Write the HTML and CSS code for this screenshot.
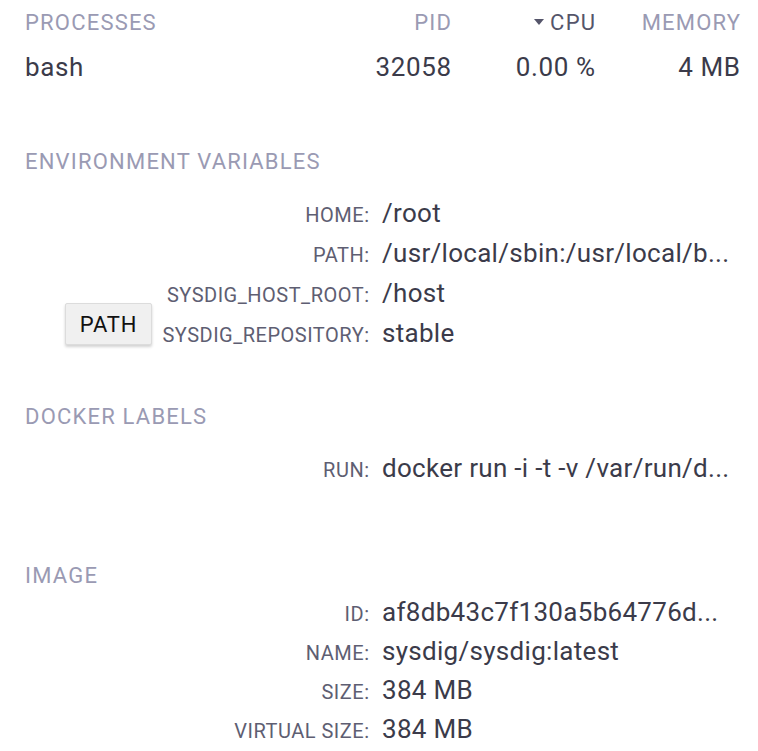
FILE: index.html
```html
<!DOCTYPE html>
<html>
<head>
<meta charset="utf-8">
<link rel="stylesheet" href="styles.css">
</head>
<body>
<div class="page">
  <section class="procs">
    <div class="th th-name">PROCESSES</div>
    <div class="th">PID</div>
    <div class="th th-sorted"><span class="caret"></span>CPU</div>
    <div class="th">MEMORY</div>
    <div class="td td-name">bash</div>
    <div class="td">32058</div>
    <div class="td">0.00 %</div>
    <div class="td">4 MB</div>
  </section>

  <section class="block env">
    <h2 class="heading">ENVIRONMENT VARIABLES</h2>
    <div class="kv">
      <div class="row"><span class="key">HOME:</span><span class="val">/root</span></div>
      <div class="row"><span class="key">PATH:</span><span class="val">/usr/local/sbin:/usr/local/b...</span></div>
      <div class="row"><span class="key">SYSDIG_HOST_ROOT:</span><span class="val">/host</span></div>
      <div class="row"><span class="key">SYSDIG_REPOSITORY:</span><span class="val">stable</span></div>
      <div class="tooltip">PATH</div>
    </div>
  </section>

  <section class="block docker">
    <h2 class="heading">DOCKER LABELS</h2>
    <div class="kv">
      <div class="row"><span class="key">RUN:</span><span class="val">docker run -i -t -v /var/run/d...</span></div>
    </div>
  </section>

  <section class="block image">
    <h2 class="heading heading-tight">IMAGE</h2>
    <div class="kv kv-tight">
      <div class="row"><span class="key">ID:</span><span class="val">af8db43c7f130a5b64776d...</span></div>
      <div class="row"><span class="key">NAME:</span><span class="val">sysdig/sysdig:latest</span></div>
      <div class="row"><span class="key">SIZE:</span><span class="val">384 MB</span></div>
      <div class="row"><span class="key">VIRTUAL SIZE:</span><span class="val">384 MB</span></div>
    </div>
  </section>
</div>
</body>
</html>
```

FILE: styles.css
```css
html, body {
  margin: 0;
  padding: 0;
  background: #ffffff;
}

body {
  font-family: Roboto, "Liberation Sans", sans-serif;
  color: #3b3b4a;
}

.page {
  padding: 11px 18px 0 25px;
}

.procs {
  display: grid;
  grid-template-columns: 1fr 140px 144px 145px;
  row-gap: 17px;
}

.th {
  font-size: 22px;
  line-height: 24px;
  letter-spacing: 1.2px;
  margin-right: -1.2px;
  color: #9a9ab3;
  text-align: right;
}

.th-sorted {
  color: #55556a;
}

.caret {
  display: inline-block;
  width: 0;
  height: 0;
  border-left: 5px solid transparent;
  border-right: 5px solid transparent;
  border-top: 6px solid #55556a;
  margin-right: 6px;
  vertical-align: 5px;
}

.td {
  font-size: 26px;
  line-height: 30px;
  letter-spacing: 0.6px;
  margin-right: -0.6px;
  color: #3b3b4a;
  text-align: right;
}

.procs .th-name,
.procs .td-name {
  text-align: left;
  margin-right: 0;
}

.block {
  margin-top: 68px;
}

.docker {
  margin-top: 52px;
}

.image {
  margin-top: 76px;
}

.heading {
  margin: 0 0 19px 0;
  font-weight: 400;
  font-size: 22px;
  line-height: 24px;
  letter-spacing: 1.2px;
  color: #9a9ab3;
}

.heading-tight {
  margin-bottom: 5px;
}

.kv {
  position: relative;
  display: flex;
  flex-direction: column;
}

.row {
  display: grid;
  grid-template-columns: 344px 1fr;
  column-gap: 13px;
  align-items: baseline;
  height: 40px;
  line-height: 40px;
}

.kv-tight .row {
  height: 39px;
  line-height: 39px;
}

.key {
  text-align: right;
  font-size: 20px;
  letter-spacing: 0.5px;
  margin-right: -0.5px;
  color: #5e5e72;
}

.val {
  font-size: 26px;
  letter-spacing: 0.3px;
  color: #3b3b4a;
  white-space: nowrap;
}

.tooltip {
  position: absolute;
  left: 40px;
  top: 110px;
  width: 87px;
  height: 42px;
  box-sizing: border-box;
  display: flex;
  align-items: center;
  justify-content: center;
  background: #f0f0f0;
  border: 1px solid #dcdcdc;
  border-radius: 2px;
  box-shadow: 0 2px 3px rgba(0, 0, 0, 0.18);
  font-size: 22px;
  letter-spacing: 0.8px;
  color: #111111;
}
```
